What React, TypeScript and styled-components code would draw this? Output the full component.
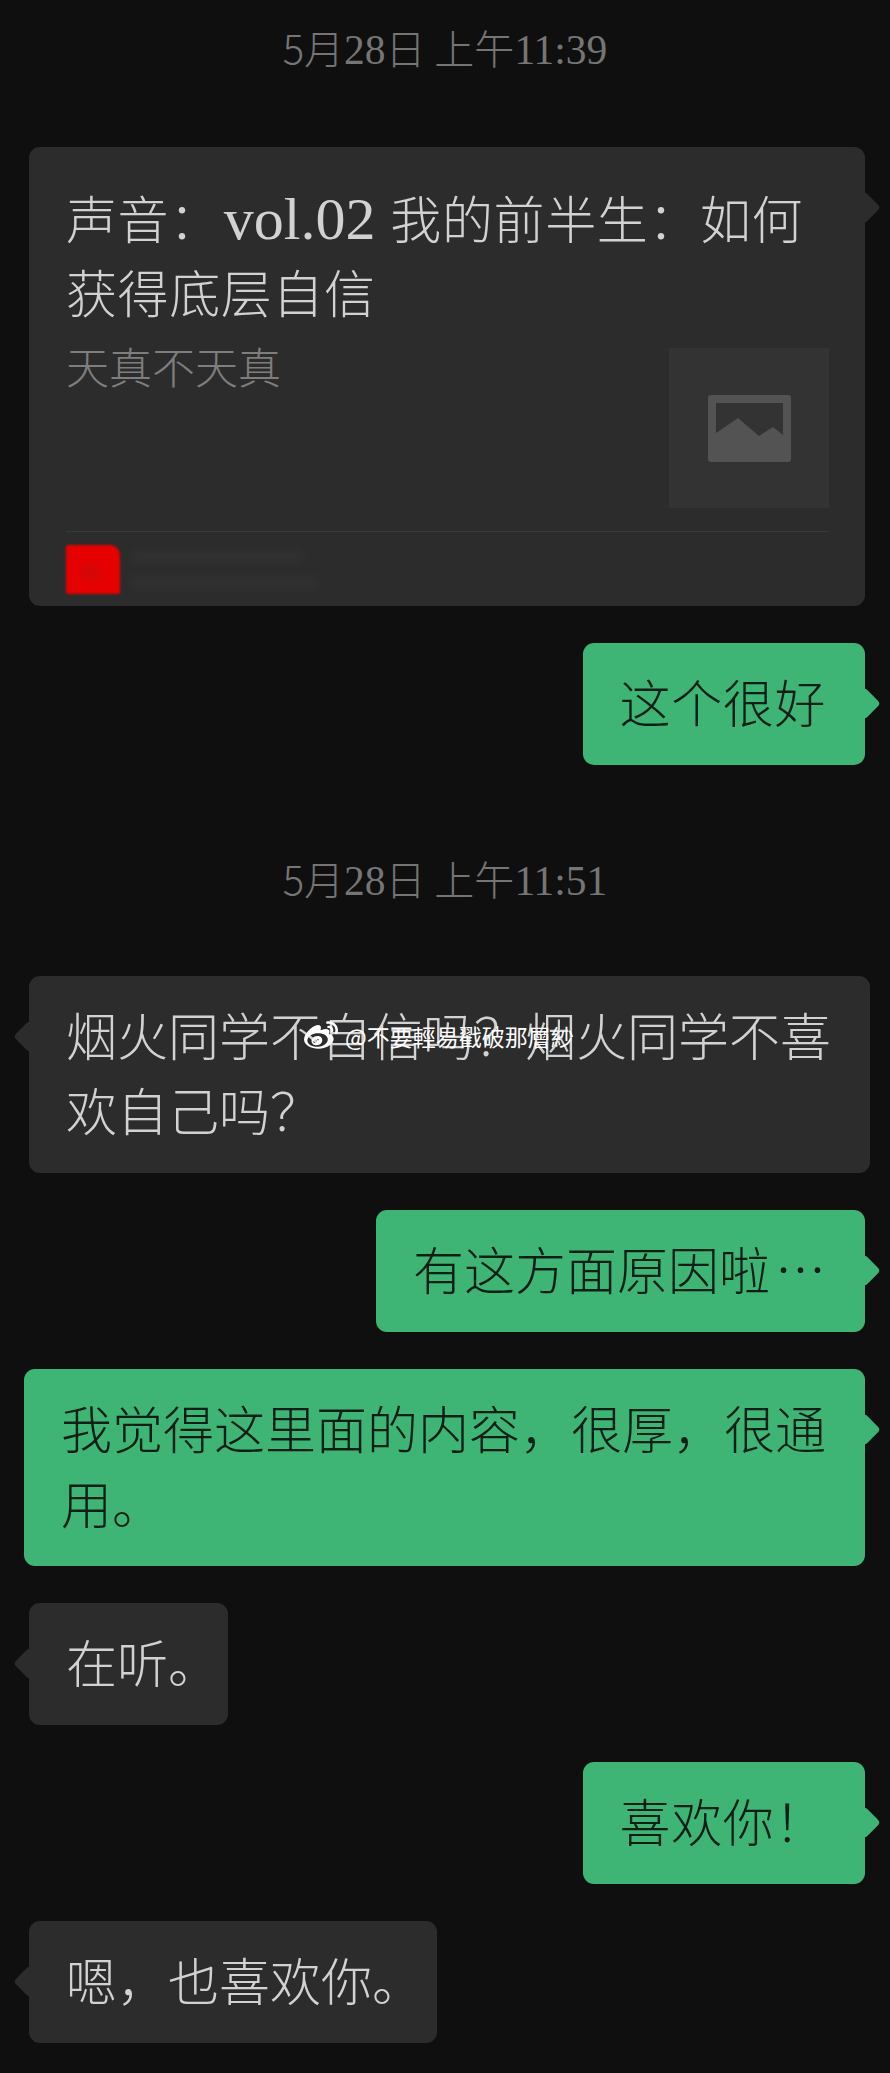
import React from 'react';
import styled, { createGlobalStyle } from 'styled-components';
import { FaWeibo } from 'react-icons/fa';

const GlobalStyle = createGlobalStyle`
  html, body {
    margin: 0;
    padding: 0;
    background: #0f0f0f;
  }
`;

const Page = styled.div`
  position: relative;
  width: 890px;
  height: 2073px;
  overflow: hidden;
  background: #0f0f0f;
  font-family: 'Noto Sans CJK SC', 'Liberation Serif', serif;
  font-weight: 300;
  display: flex;
  flex-direction: column;
  gap: 37px;
`;

const TimeLabel = styled.div`
  height: 48px;
  margin: 52px 0 37px;
  text-align: center;
  color: #757575;
  font-size: 40px;
  line-height: 48px;

  &:first-child {
    margin: 23px 0 39px;
  }
`;

const TimeDigits = styled.span`
  font-family: 'Liberation Serif', serif;
  font-weight: 400;
  font-size: 41.5px;
  line-height: 0;
`;

const Row = styled.div<{ $mine?: boolean }>`
  display: flex;
  justify-content: ${(p) => (p.$mine ? 'flex-end' : 'flex-start')};
  padding: ${(p) => (p.$mine ? '0 25px 0 0' : '0 0 0 29px')};
`;

const Bubble = styled.div<{ $mine?: boolean }>`
  position: relative;
  box-sizing: border-box;
  max-width: 841px;
  padding: 21px 39px 26px 37px;
  border-radius: 11px;
  background: ${(p) => (p.$mine ? '#3eb575' : '#2c2c2c')};
  color: ${(p) => (p.$mine ? '#0e1f16' : '#d2d2d2')};
  font-size: 51px;
  line-height: 75px;

  &::after {
    content: '';
    position: absolute;
    top: 49px;
    ${(p) => (p.$mine ? 'right: -11px;' : 'left: -11px;')}
    width: 23px;
    height: 23px;
    border-radius: 4px;
    background: inherit;
    transform: rotate(45deg);
  }
`;

const ShortBubble = styled(Bubble)`
  letter-spacing: 0.6px;
`;

const TrailingMark = styled.span<{ $w: number }>`
  display: inline-block;
  width: ${(p) => p.$w}px;
`;

const Ellipsis = styled.span`
  margin-left: 5px;
`;

const Card = styled.div`
  position: relative;
  box-sizing: border-box;
  width: 836px;
  padding: 33px 36px 12px 37px;
  border-radius: 11px;
  background: #2c2c2c;

  &::after {
    content: '';
    position: absolute;
    top: 49px;
    right: -11px;
    width: 23px;
    height: 23px;
    border-radius: 4px;
    background: inherit;
    transform: rotate(45deg);
  }
`;

const CardTitle = styled.div`
  color: #d2d2d2;
  font-size: 51px;
  line-height: 74px;
  letter-spacing: 0.6px;
`;

const TitleLatin = styled.span`
  margin: 0 3px;
  font-family: 'Liberation Serif', serif;
  font-weight: 400;
  font-size: 60px;
  line-height: 0;
  letter-spacing: 0;
`;

const CardBody = styled.div`
  display: flex;
  justify-content: space-between;
  margin-top: 20px;
`;

const CardAuthor = styled.div`
  color: #7e7e7e;
  font-size: 43px;
  line-height: 34px;
`;

const Thumb = styled.div`
  display: flex;
  align-items: center;
  justify-content: center;
  width: 160px;
  height: 160px;
  background: #333333;
`;

const CardFooter = styled.div`
  display: flex;
  align-items: center;
  gap: 12px;
  margin-top: 23px;
  padding-top: 13px;
  border-top: 1px solid #393939;
`;

const RedactedAvatar = styled.div`
  width: 54px;
  height: 49px;
  border-radius: 2px 10px 2px 2px;
  background: radial-gradient(circle at 45% 55%, #cf0808 0, #e60000 35%);
  filter: blur(0.8px);
`;

const RedactedLines = styled.div`
  display: flex;
  flex-direction: column;
  gap: 12px;
`;

const RedactedLine = styled.div<{ $w: number }>`
  width: ${(p) => p.$w}px;
  height: 14px;
  background: #313131;
  filter: blur(3px);
`;

const Watermark = styled.div`
  position: absolute;
  top: 1018px;
  left: 304px;
  display: flex;
  align-items: center;
  gap: 7px;
  color: #ffffff;
  font-family: 'Noto Sans CJK TC', 'Liberation Sans', sans-serif;
  font-weight: 400;
  font-size: 23px;
  line-height: 36px;
  white-space: nowrap;
`;

const ImageIcon = () => (
  <svg width="83" height="67" viewBox="0 0 83 67">
    <rect width="83" height="67" rx="3" fill="#535353" />
    <path d="M8 8H75V40L65 32L51 41L30 23L8 38Z" fill="#333333" />
  </svg>
);

export default function App() {
  return (
    <Page>
      <GlobalStyle />
      <TimeLabel>
        5月<TimeDigits>28</TimeDigits>日 上午<TimeDigits>11:39</TimeDigits>
      </TimeLabel>
      <Row $mine>
        <Card>
          <CardTitle>
            声音：<TitleLatin>vol.02</TitleLatin> 我的前半生：如何获得底层自信
          </CardTitle>
          <CardBody>
            <CardAuthor>天真不天真</CardAuthor>
            <Thumb>
              <ImageIcon />
            </Thumb>
          </CardBody>
          <CardFooter>
            <RedactedAvatar />
            <RedactedLines>
              <RedactedLine $w={170} />
              <RedactedLine $w={185} />
            </RedactedLines>
          </CardFooter>
        </Card>
      </Row>
      <Row $mine>
        <ShortBubble $mine>这个很好</ShortBubble>
      </Row>

      <TimeLabel>
        5月<TimeDigits>28</TimeDigits>日 上午<TimeDigits>11:51</TimeDigits>
      </TimeLabel>
      <Row>
        <Bubble>烟火同学不自信吗？烟火同学不喜欢自己吗？</Bubble>
      </Row>
      <Row $mine>
        <Bubble $mine>
          有这方面原因啦<Ellipsis>…</Ellipsis>
        </Bubble>
      </Row>
      <Row $mine>
        <Bubble $mine>我觉得这里面的内容，很厚，很通用。</Bubble>
      </Row>
      <Row>
        <Bubble>
          在听<TrailingMark $w={21}>。</TrailingMark>
        </Bubble>
      </Row>
      <Row $mine>
        <ShortBubble $mine>喜欢你！</ShortBubble>
      </Row>
      <Row>
        <Bubble>
          嗯，也喜欢你<TrailingMark $w={26}>。</TrailingMark>
        </Bubble>
      </Row>

      <Watermark>
        <FaWeibo size={34} />
        <span>@不要輕易戳破那層紗</span>
      </Watermark>
    </Page>
  );
}
